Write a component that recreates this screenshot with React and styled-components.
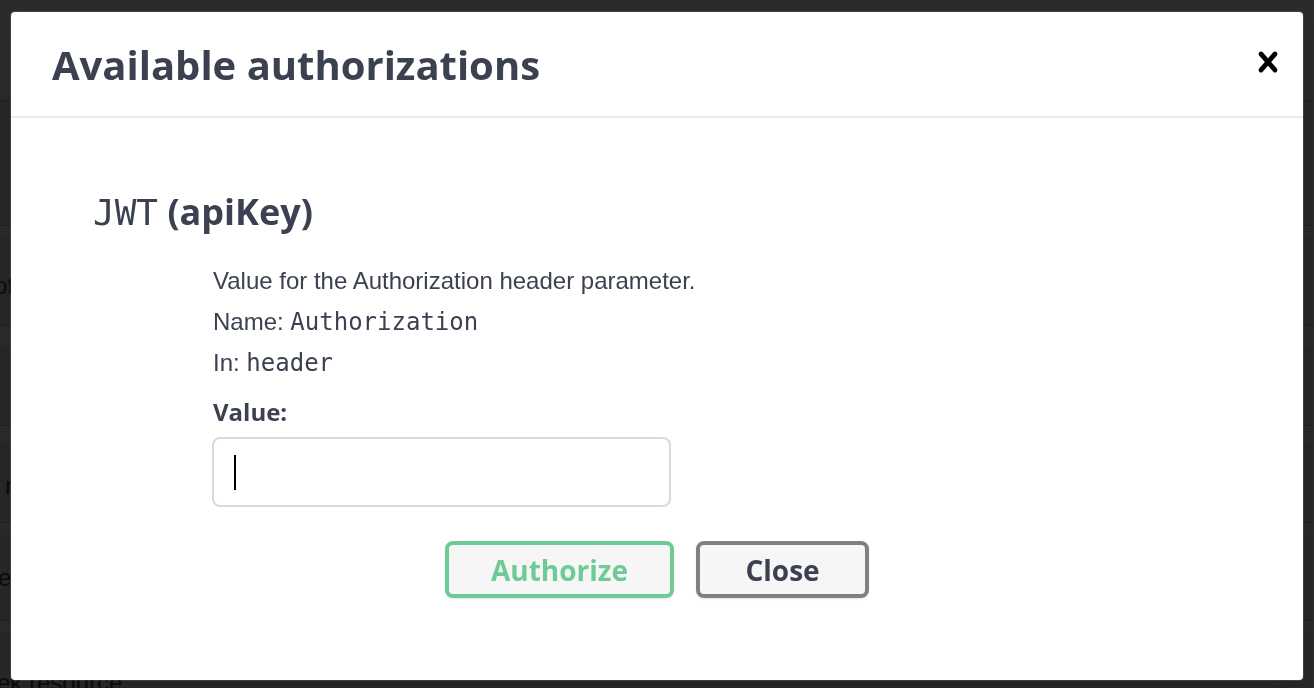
import React from "react";
import styled, { createGlobalStyle } from "styled-components";

const rows = [
  { height: 100, tone: "#ffffff", band: 0, line: false },
  { height: 125, tone: "#e9e9e9", band: 0, line: true },
  { height: 100, tone: "#ededed", band: 12, line: true, text: "of", offset: -6, top: 46 },
  { height: 100, tone: "#ededed", band: 20, line: true },
  { height: 97, tone: "#ededed", band: 16, line: true, text: "r", offset: 5, top: 46 },
  { height: 98, tone: "#ededed", band: 12, line: true, text: "ek", offset: -2, top: 41 },
  { height: 80, tone: "#ededed", band: 12, line: true, text: "ek resource.", offset: -3, top: 48 },
];

function App() {
  return (
    <>
      <GlobalStyle />
      <BackPage>
        {rows.map((row, i) => (
          <Row key={i} $height={row.height} $tone={row.tone} $band={row.band} $line={row.line} $top={row.top}>
            {row.text && <Snippet $offset={row.offset}>{row.text}</Snippet>}
          </Row>
        ))}
      </BackPage>

      <Overlay>
        <Modal>
          <Header>
            <Title>Available authorizations</Title>
            <CloseButton aria-label="Close">
              <svg width="40" height="40" viewBox="0 0 20 20">
                <path
                  fill="#000"
                  d="M14.348 14.849a1.2 1.2 0 0 1-1.697 0L10 11.819l-2.651 3.029a1.2 1.2 0 1 1-1.697-1.697l2.758-3.15-2.759-3.152a1.2 1.2 0 1 1 1.697-1.697L10 8.183l2.651-3.031a1.2 1.2 0 1 1 1.697 1.697l-2.758 3.152 2.758 3.15a1.2 1.2 0 0 1 0 1.698z"
                />
              </svg>
            </CloseButton>
          </Header>

          <Body>
            <AuthBlock>
              <SchemeTitle>
                <Code $size="36px">JWT</Code> (apiKey)
              </SchemeTitle>

              <Details>
                <Line>Value for the Authorization header parameter.</Line>
                <Line>
                  Name: <Code $size="24px">Authorization</Code>
                </Line>
                <Line>
                  In: <Code $size="24px">header</Code>
                </Line>
                <Label>Value:</Label>
                <InputWrap>
                  <ValueInput type="text" aria-label="auth-bearer-value" />
                  <Caret />
                </InputWrap>
              </Details>

              <Actions>
                <ActionButton $color="#6fcb96" $text="#6fcb96" $width="229px">
                  Authorize
                </ActionButton>
                <ActionButton $color="#808080" $text="#3b4151" $width="173px">
                  Close
                </ActionButton>
              </Actions>
            </AuthBlock>
          </Body>
        </Modal>
      </Overlay>
    </>
  );
}

export default App;

const GlobalStyle = createGlobalStyle`
  html, body {
    margin: 0;
    padding: 0;
    width: 1314px;
    height: 688px;
    overflow: hidden;
    background: #ffffff;
  }
  * { box-sizing: border-box; }
`;

const BackPage = styled.div`
  display: flex;
  flex-direction: column;
  height: 688px;
  overflow: hidden;
  font-family: "Liberation Sans", Arial, sans-serif;
  color: #3b4151;
`;

const Row = styled.div`
  flex: none;
  display: flex;
  align-items: flex-start;
  height: ${(p) => p.$height}px;
  padding-top: ${(p) => p.$top || 0}px;
  border-top: ${(p) => (p.$line ? "1px solid #bcbcbc" : "none")};
  background: linear-gradient(
    #ffffff 0 ${(p) => p.$band}px,
    ${(p) => p.$tone} ${(p) => p.$band}px
  );
`;

const Snippet = styled.span`
  margin-left: ${(p) => p.$offset}px;
  font-size: 24px;
  line-height: 28px;
  white-space: nowrap;
`;

const Overlay = styled.div`
  position: fixed;
  inset: 0;
  display: flex;
  align-items: flex-start;
  padding: 12px 0 0 11px;
  background: rgba(0, 0, 0, 0.83);
`;

const Modal = styled.div`
  width: 1292px;
  background: #ffffff;
  border-radius: 4px;
  box-shadow: 0 0 0 1px rgba(255, 255, 255, 0.12), 0 10px 30px -2px rgba(0, 0, 0, 0.2);
  font-family: "Open Sans", sans-serif;
  color: #3b4151;
`;

const Header = styled.div`
  display: flex;
  align-items: center;
  padding: 26px 0 24px;
  border-bottom: 2px solid #ebebeb;
`;

const Title = styled.h3`
  flex: 1;
  margin: 0;
  padding-left: 41px;
  font-size: 40px;
  line-height: 54px;
  font-weight: 700;
`;

const CloseButton = styled.button`
  display: flex;
  width: 40px;
  height: 40px;
  margin: -6px 15px 0 0;
  padding: 0;
  border: none;
  background: none;
  cursor: pointer;
`;

const Body = styled.div`
  padding: 40px;
`;

const AuthBlock = styled.div`
  padding: 29px 42px 42px;
`;

const SchemeTitle = styled.h4`
  margin: 0 0 30px;
  font-size: 36px;
  line-height: 49px;
  font-weight: 700;
`;

const Code = styled.span`
  font-family: "DejaVu Sans Mono", "Liberation Mono", monospace;
  font-size: ${(p) => p.$size};
  font-weight: 400;
`;

const Details = styled.div`
  padding-left: 120px;
`;

const Line = styled.p`
  margin: 0 0 13px;
  font-family: "Liberation Sans", Arial, sans-serif;
  font-size: 24px;
  line-height: 28px;
`;

const Label = styled.label`
  display: block;
  margin: 19px 0 10px;
  font-size: 24px;
  line-height: 31px;
  font-weight: 700;
`;

const InputWrap = styled.div`
  position: relative;
  width: 459px;
  margin-left: -1px;
`;

const ValueInput = styled.input`
  display: block;
  width: 100%;
  height: 70px;
  padding: 0 22px;
  border: 2px solid #d9d9d9;
  border-radius: 8px;
  outline: none;
  background: #ffffff;
  font-family: "Liberation Sans", Arial, sans-serif;
  font-size: 24px;
`;

const Caret = styled.span`
  position: absolute;
  left: 22px;
  top: 18px;
  width: 2px;
  height: 35px;
  background: #000000;
`;

const Actions = styled.div`
  display: flex;
  justify-content: center;
  gap: 22px;
  margin-top: 34px;
`;

const ActionButton = styled.button`
  width: ${(p) => p.$width};
  height: 57px;
  border: 4px solid ${(p) => p.$color};
  border-radius: 8px;
  background: #f6f6f6;
  box-shadow: 0 1px 2px rgba(0, 0, 0, 0.1);
  color: ${(p) => p.$text};
  font-family: "Open Sans", sans-serif;
  font-size: 28px;
  font-weight: 700;
  cursor: pointer;
`;
